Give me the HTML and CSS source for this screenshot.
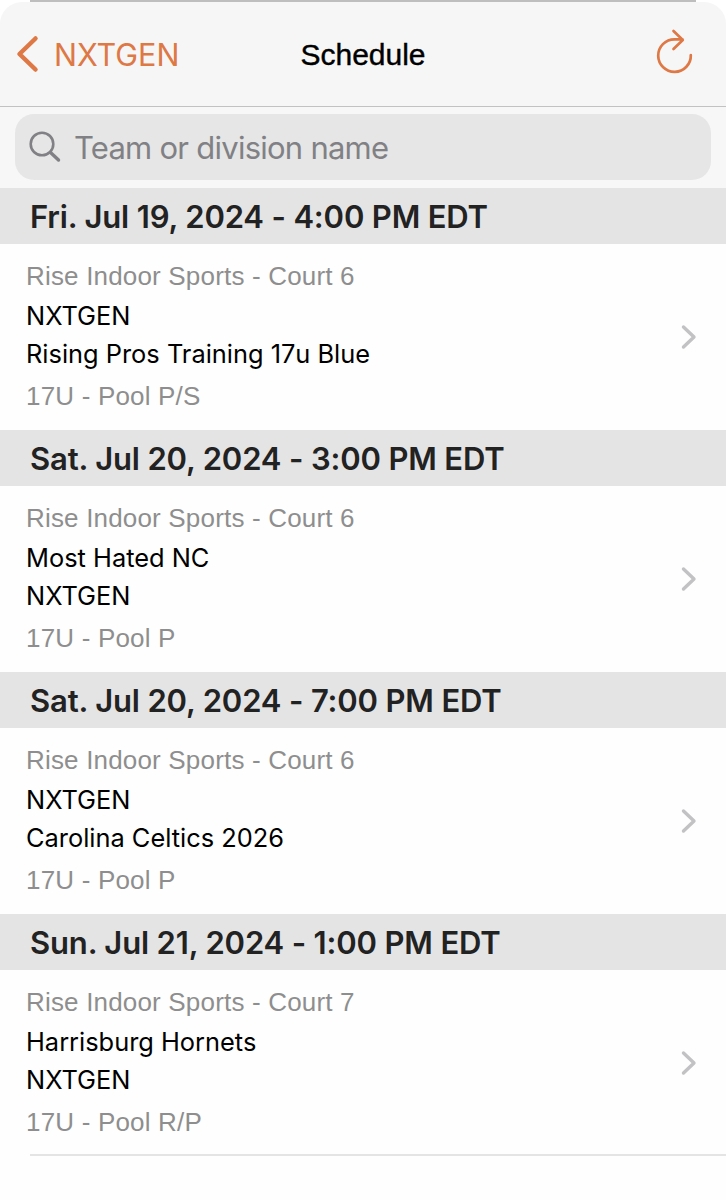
FILE: index.html
```html
<!DOCTYPE html>
<html lang="en">
<head>
  <meta charset="UTF-8" />
  <meta name="viewport" content="width=device-width, initial-scale=1.0"/>
  <title>Schedule</title>
  <link rel="stylesheet" href="styles.css">
</head>
<body>
  <div class="sheet">
    <header class="navbar">
      <a class="back">
        <svg width="24" height="40" viewBox="0 0 24 40"><path d="M20.5 4.5 L4.5 20 L20.5 35.5" /></svg>
        <span>NXTGEN</span>
      </a>
      <h1>Schedule</h1>
      <button class="refresh" aria-label="Refresh">
        <svg width="40" height="46" viewBox="0 0 40 46"><path d="M36.8 27 A16.3 16.3 0 1 1 20.5 11.3 H28.5 M19.5 3 L28.8 12 L19.5 21" /></svg>
      </button>
    </header>

    <div class="search">
      <div class="search-box">
        <svg width="34" height="34" viewBox="0 0 34 34"><circle cx="14" cy="14" r="11.3" /><path class="handle" d="M22.5 22.5 L30.5 30" /></svg>
        <span>Team or division name</span>
      </div>
    </div>

    <main>
      <h2>Fri. Jul 19, 2024 - 4:00 PM EDT</h2>
      <div class="game">
        <div>
          <p class="venue">Rise Indoor Sports - Court 6</p>
          <p class="team">NXTGEN</p>
          <p class="team">Rising Pros Training 17u Blue</p>
          <p class="pool">17U - Pool P/S</p>
        </div>
        <svg class="arrow" width="18" height="26" viewBox="0 0 18 26"><path d="M3.5 3 L14 13 L3.5 23" /></svg>
      </div>

      <h2>Sat. Jul 20, 2024 - 3:00 PM EDT</h2>
      <div class="game">
        <div>
          <p class="venue">Rise Indoor Sports - Court 6</p>
          <p class="team">Most Hated NC</p>
          <p class="team">NXTGEN</p>
          <p class="pool">17U - Pool P</p>
        </div>
        <svg class="arrow" width="18" height="26" viewBox="0 0 18 26"><path d="M3.5 3 L14 13 L3.5 23" /></svg>
      </div>

      <h2>Sat. Jul 20, 2024 - 7:00 PM EDT</h2>
      <div class="game">
        <div>
          <p class="venue">Rise Indoor Sports - Court 6</p>
          <p class="team">NXTGEN</p>
          <p class="team">Carolina Celtics 2026</p>
          <p class="pool">17U - Pool P</p>
        </div>
        <svg class="arrow" width="18" height="26" viewBox="0 0 18 26"><path d="M3.5 3 L14 13 L3.5 23" /></svg>
      </div>

      <h2>Sun. Jul 21, 2024 - 1:00 PM EDT</h2>
      <div class="game">
        <div>
          <p class="venue">Rise Indoor Sports - Court 7</p>
          <p class="team">Harrisburg Hornets</p>
          <p class="team">NXTGEN</p>
          <p class="pool">17U - Pool R/P</p>
        </div>
        <svg class="arrow" width="18" height="26" viewBox="0 0 18 26"><path d="M3.5 3 L14 13 L3.5 23" /></svg>
      </div>
      <hr>
    </main>
  </div>
</body>
</html>
```
FILE: styles.css
```css
* {
  box-sizing: border-box;
}
body {
  margin: 0;
  font-family: Inter, "Liberation Sans", sans-serif;
  background: linear-gradient(#bebebe, #bebebe) 30px 0 / 666px 2px no-repeat #fff;
}
h1, h2, p {
  margin: 0;
}
svg {
  display: block;
  fill: none;
  stroke-linecap: round;
  stroke-linejoin: round;
}
.sheet {
  margin-top: 2px;
  height: 1198px;
  background: #fefefe;
  border-radius: 22px 22px 0 0;
  overflow: hidden;
}
.navbar {
  display: grid;
  grid-template-columns: 1fr auto 1fr;
  align-items: center;
  height: 105px;
  padding: 0 15px;
  background: #f6f6f6;
  border-bottom: 1px solid #c2c2c2;
}
.back {
  display: flex;
  align-items: center;
  gap: 15px;
  color: #de7845;
  font-size: 30.5px;
}
.back svg {
  stroke: #de7845;
  stroke-width: 4.5;
}
h1 {
  padding-top: 2px;
  font: 400 30px/40px "Liberation Sans", sans-serif;
  color: #000;
  -webkit-text-stroke: 0.4px #000;
}
.refresh {
  justify-self: end;
  margin: 0 17px 6px 0;
  padding: 0;
  border: 0;
  background: none;
}
.refresh svg {
  stroke: #de7845;
  stroke-width: 2.7;
}
.search {
  height: 81px;
  padding: 7px 15px 0;
  background: #f7f7f7;
}
.search-box {
  display: flex;
  align-items: center;
  gap: 12px;
  height: 66px;
  padding: 0 13px;
  border-radius: 19px;
  background: #e6e6e6;
  color: #818185;
  font-size: 31px;
  letter-spacing: -0.75px;
}
.search-box svg {
  stroke: #818185;
  stroke-width: 2.6;
}
.search-box .handle {
  stroke-width: 3.4;
}
h2 {
  height: 56px;
  padding-left: 30px;
  background: #e4e4e4;
  color: #222;
  font-size: 31px;
  font-weight: 600;
  line-height: 58px;
  letter-spacing: -0.16px;
}
.game {
  display: flex;
  align-items: center;
  justify-content: space-between;
  height: 186px;
  padding: 0 28px 0 26px;
}
.venue, .pool {
  color: #8e8e8e;
  font: 26px/38px "Liberation Sans", sans-serif;
  letter-spacing: 0.18px;
}
.venue {
  line-height: 34px;
  padding-bottom: 4px;
}
.team {
  color: #000;
  font-size: 25.4px;
  line-height: 38px;
}
.pool {
  margin-top: 4px;
}
.arrow {
  stroke: #c2c2c4;
  stroke-width: 3.4;
}
hr {
  height: 2px;
  margin: -2px 0 0 30px;
  border: 0;
  background: #e4e4e4;
}
```
